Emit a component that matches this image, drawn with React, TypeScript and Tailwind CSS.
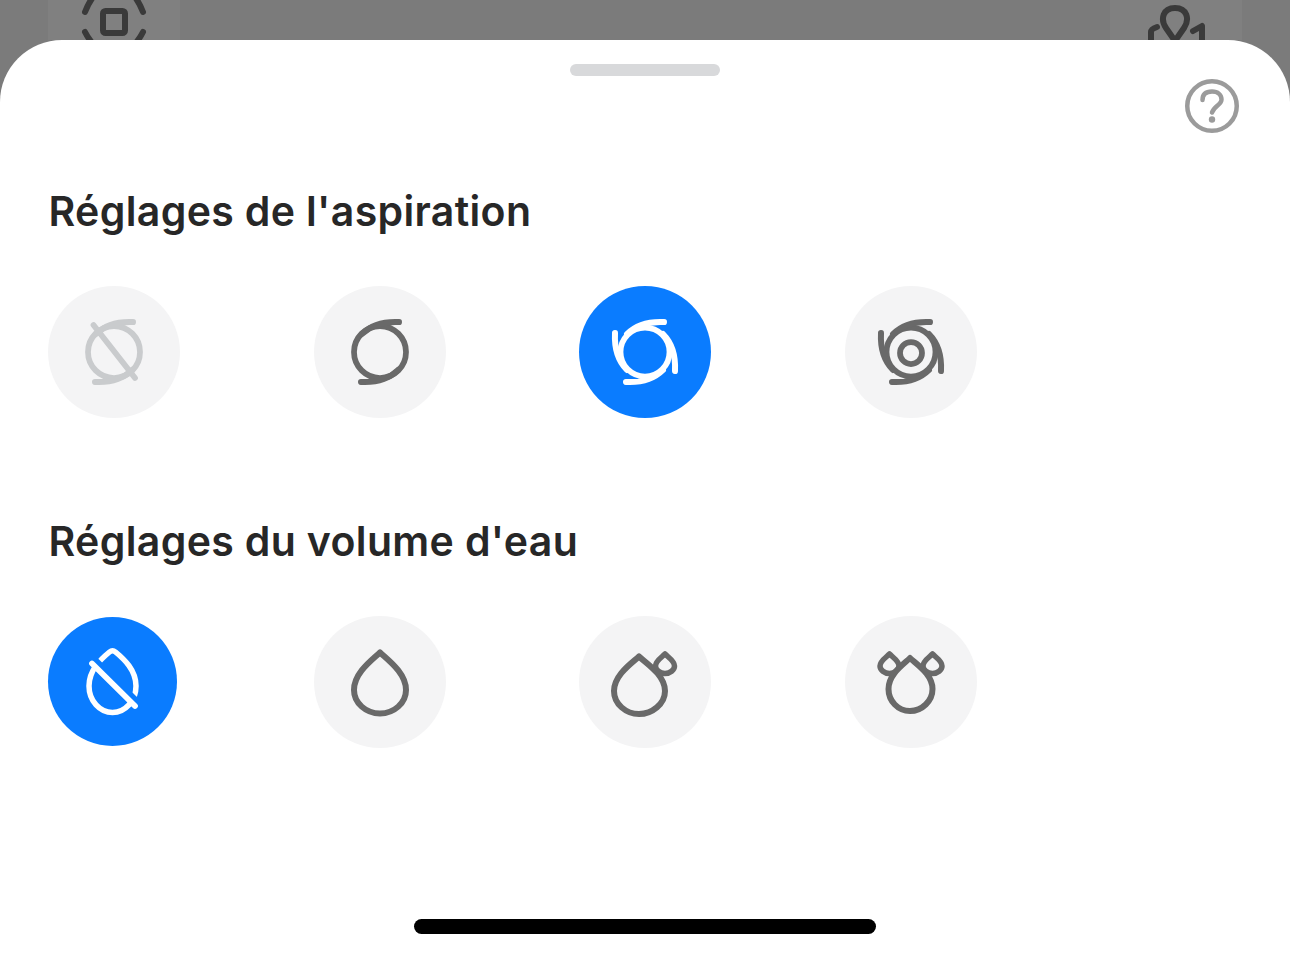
const Ring = ({ r = 26, color = '#696969', w = 5.75 }: { r?: number; color?: string; w?: number }) => (
  <circle cx="66" cy="66" r={r} fill="none" stroke={color} strokeWidth={w} />
);

// one swirl arm, turned around the middle of the icon
const TAIL = 'M85 36 C75 35.5 59 37 48 48';

const Tails = ({ color, sides = false }: { color: string; sides?: boolean }) => (
  <g fill="none" stroke={color} strokeWidth="6" strokeLinecap="round">
    <path d={TAIL} />
    <path d={TAIL} transform="rotate(180 66 66)" />
    {sides && <path d={TAIL} transform="rotate(90 66 66)" />}
    {sides && <path d={TAIL} transform="rotate(270 66 66)" />}
  </g>
);

const FanOff = () => (
  <svg viewBox="0 0 132 132" className="size-[132px]">
    <Ring color="#c9cbcd" />
    <Tails color="#c9cbcd" />
    <path d="M45.5 39 L87 92" stroke="#c9cbcd" strokeWidth="5.75" strokeLinecap="round" />
  </svg>
);

const FanLow = () => (
  <svg viewBox="0 0 132 132" className="size-[132px]">
    <Ring />
    <Tails color="#696969" />
  </svg>
);

const FanMid = () => (
  <svg viewBox="0 0 132 132" className="size-[132px]">
    <Ring r={24.5} color="#fff" />
    <Tails color="#fff" sides />
  </svg>
);

const FanMax = () => (
  <svg viewBox="0 0 132 132" className="size-[132px]">
    <Ring r={24.5} />
    <Tails color="#696969" sides />
    <circle cx="66" cy="67" r="11" fill="none" stroke="#696969" strokeWidth="5.75" />
  </svg>
);

const DropOff = () => (
  <svg viewBox="0 0 129 129" className="size-[129px]">
    <path
      d="M61.5 35 Q64.5 32.5 67.5 35 C76 42 88 53 88 69 C88 84 77 95.5 64.5 95.5 C52 95.5 41 84 41 69 C41 53 53 42 61.5 35 Z"
      fill="none"
      stroke="#fff"
      strokeWidth="5.5"
    />
    <path d="M44 46.5 L87 89" stroke="#0a7cff" strokeWidth="10" transform="translate(2 -2)" />
    <path d="M44 46.5 L87 89" stroke="#fff" strokeWidth="5.75" strokeLinecap="round" />
  </svg>
);

const DropLow = () => (
  <svg viewBox="0 0 132 132" className="size-[132px]">
    <path
      d="M66 36.5 C58 44 40 57 40 74 C40 87 52 97.5 66 97.5 C80 97.5 92 87 92 74 C92 57 74 44 66 36.5 Z"
      fill="none"
      stroke="#696969"
      strokeWidth="6"
      strokeLinejoin="round"
    />
  </svg>
);

const SMALL_DROP = 'M0 38 C-3 41 -9.5 45 -9.5 50 C-9.5 54 -5 57.5 0 57.5 C5 57.5 9.5 54 9.5 50 C9.5 45 3 41 0 38 Z';

const DropMid = () => (
  <svg viewBox="0 0 132 132" className="size-[132px]">
    <path d={SMALL_DROP} transform="translate(86 0)" fill="none" stroke="#696969" strokeWidth="5.5" strokeLinejoin="round" />
    <path
      d="M60 40.5 C53 47 35 59 35 75 C35 88 47 98 60 98 C73 98 86 88 86 75 C86 59 67 47 60 40.5 Z"
      fill="#f4f4f5"
      stroke="#696969"
      strokeWidth="6"
      strokeLinejoin="round"
    />
  </svg>
);

const DropMax = () => (
  <svg viewBox="0 0 132 132" className="size-[132px]">
    <g fill="none" stroke="#696969" strokeWidth="5.5" strokeLinejoin="round">
      <path d={SMALL_DROP} transform="translate(44.5 0)" />
      <path d={SMALL_DROP} transform="translate(87.5 0)" />
    </g>
    <path
      d="M65 42 C59 48 43.5 58 43.5 73 C43.5 85 53 95 65 95 C77 95 87.5 85 87.5 73 C87.5 58 71 48 65 42 Z"
      fill="#f4f4f5"
      stroke="#696969"
      strokeWidth="6"
      strokeLinejoin="round"
    />
  </svg>
);

const Dot = ({ active, size = 'size-[132px]', children }: { active?: boolean; size?: string; children: React.ReactNode }) => (
  <div className={`${size} rounded-full flex items-center justify-center ${active ? 'bg-[#0a7cff]' : 'bg-[#f4f4f5]'}`}>
    {children}
  </div>
);

const Heading = ({ children }: { children: React.ReactNode }) => (
  <h2 className="pl-[48.5px] h-[50px] leading-[50px] text-[41px] font-semibold tracking-[0.35px] text-[#272727] font-[Inter,sans-serif] whitespace-nowrap">
    {children}
  </h2>
);

const App = () => {
  return (
    <div className="w-[1290px] h-[958px] overflow-hidden bg-[#7b7b7b] flex flex-col">
      <div className="h-10 flex justify-between pl-12 pr-12 shrink-0">
        <div className="w-[132px] h-10 bg-[#808080]">
          <svg viewBox="0 0 132 40" className="w-[132px] h-10">
            <g fill="none" stroke="#3a3a3a" strokeWidth="6" strokeLinecap="round">
              <rect x="55" y="11" width="22" height="22" rx="2.5" />
              <path d="M37 12 Q40 4 45 -3" />
              <path d="M95 12 Q92 4 87 -3" />
              <path d="M37 32 Q40 38 45 44" />
              <path d="M95 32 Q92 38 87 44" />
            </g>
          </svg>
        </div>
        <div className="w-[132px] h-10 bg-[#808080]">
          <svg viewBox="0 0 132 40" className="w-[132px] h-10">
            <g fill="none" stroke="#3a3a3a" strokeWidth="6" strokeLinecap="round" strokeLinejoin="round">
              <path d="M65 41 L56 28 C50 19 53 8 65 8 C77 8 80 19 74 28 Z" />
              <path d="M41 44 V32 Q41 29 47 27" />
              <path d="M83 31 L92 26 V44" />
            </g>
          </svg>
        </div>
      </div>

      <div className="flex-1 bg-white rounded-t-[62px] flex flex-col pt-6">
        <div className="w-[150px] h-3 mx-auto rounded-full bg-[#d8d9db] shrink-0" />

        <div className="flex justify-end pr-[51px] mt-[3px]">
          <svg viewBox="0 0 54 54" className="size-[54px]">
            <g fill="none" stroke="#9b9b9b" strokeWidth="4.5" strokeLinecap="round">
              <circle cx="27" cy="27" r="24.75" />
              <path d="M17.5 21 C17.5 15 21 12.5 27 12.5 C33 12.5 36.5 16 36.5 20.5 C36.5 26 29 27 27 33.5" />
            </g>
            <circle cx="27" cy="40.5" r="3.2" fill="#9b9b9b" />
          </svg>
        </div>

        <div className="mt-[53px]">
          <Heading>Réglages de l'aspiration</Heading>
        </div>
        <div className="mt-[50px] pl-12 flex gap-[133.67px]">
          <Dot><FanOff /></Dot>
          <Dot><FanLow /></Dot>
          <Dot active><FanMid /></Dot>
          <Dot><FanMax /></Dot>
        </div>

        <div className="mt-[98px]">
          <Heading>Réglages du volume d'eau</Heading>
        </div>
        <div className="mt-[50px] pl-12 flex gap-[133.67px] items-start">
          <div className="w-[132px] pt-px">
            <Dot active size="size-[129px]"><DropOff /></Dot>
          </div>
          <Dot><DropLow /></Dot>
          <Dot><DropMid /></Dot>
          <Dot><DropMax /></Dot>
        </div>

        <div className="mt-[171px] w-[462px] h-[15px] mx-auto rounded-full bg-black shrink-0" />
      </div>
    </div>
  );
};

export default App;
